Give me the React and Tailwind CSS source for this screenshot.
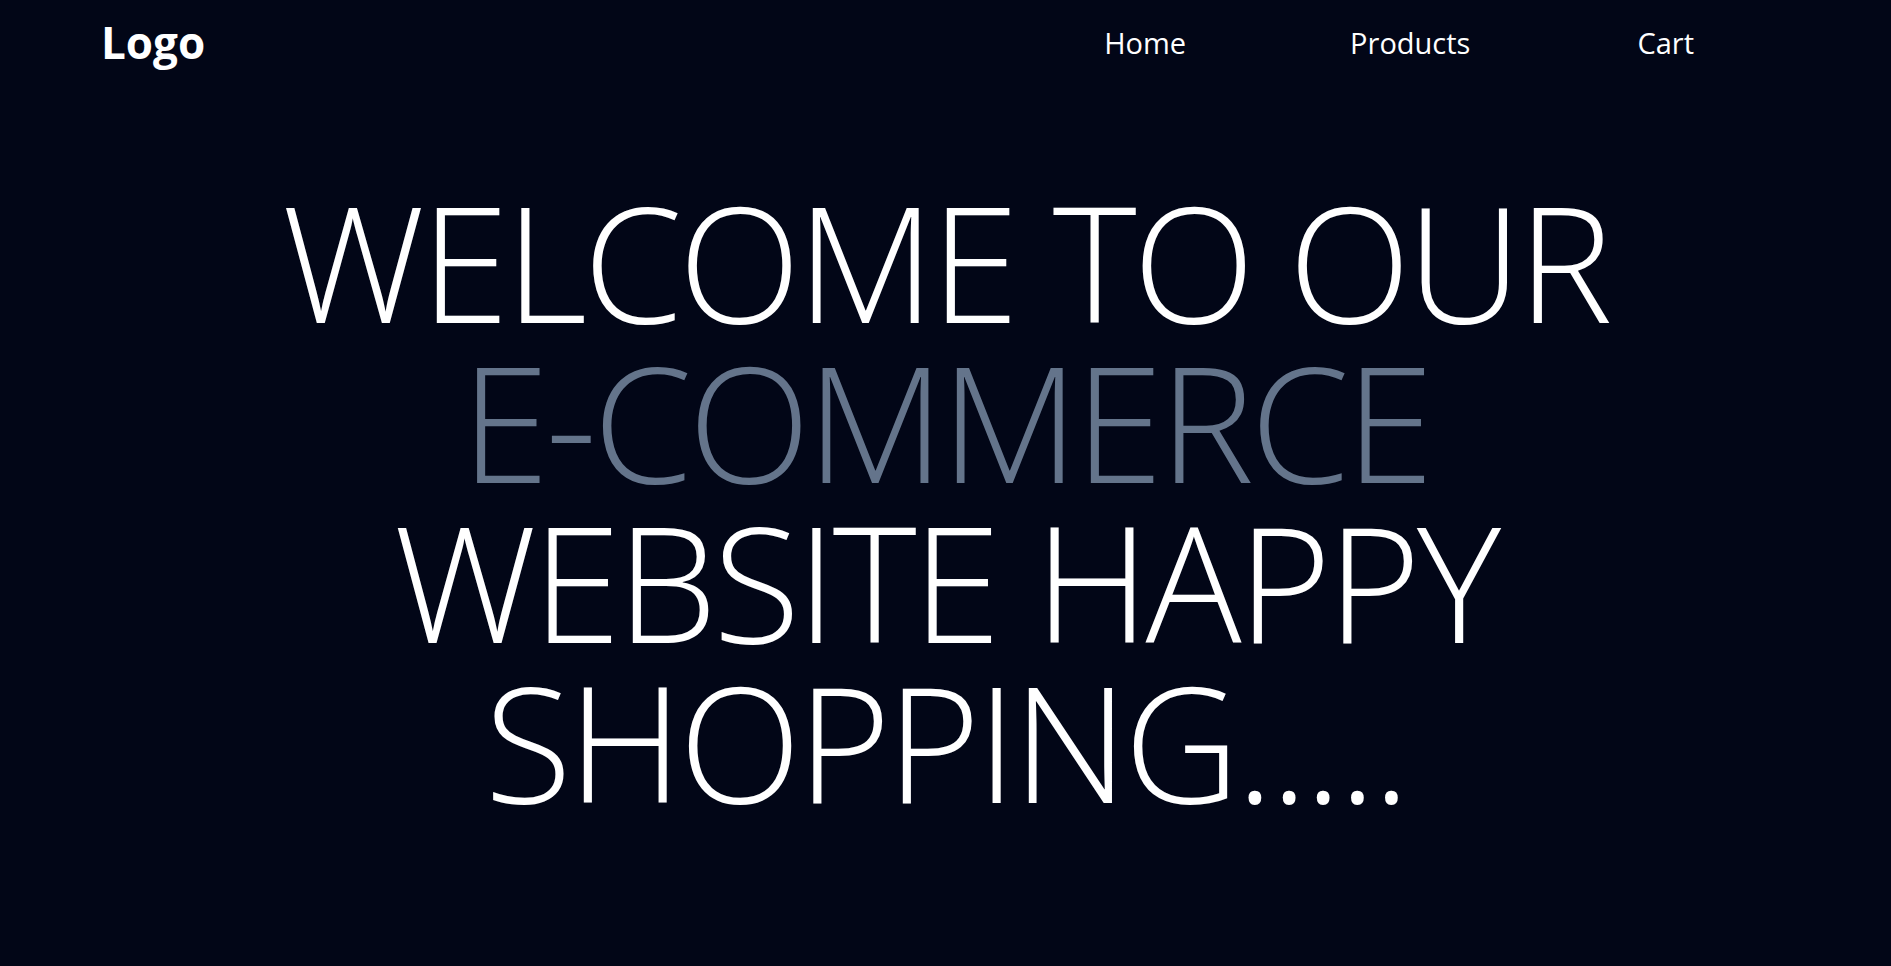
import React from "react";

export default function App() {
  const font = { fontFamily: '"Open Sans", "Noto Sans", sans-serif' };
  return (
    <div className="min-h-[966px] w-full bg-[#020617] text-white" style={font}>
      <header className="flex items-start justify-between pl-[101px] pr-[197px] pt-[12px]">
        <div className="text-[44px] font-bold leading-[60px]">Logo</div>
        <nav className="flex pt-[11px] text-[29px] leading-[40px]">
          <a className="mr-[164px] text-white">Home</a>
          <a className="mr-[167px] text-white">Products</a>
          <a className="text-white">Cart</a>
        </nav>
      </header>
      <main className="mt-[109px] flex justify-center">
        <h1 className="text-center text-[160px] font-light leading-[160px] tracking-[-4px]">
          WELCOME TO OUR
          <br />
          <span className="text-[#64748b]">E-COMMERCE</span>
          <br />
          WEBSITE HAPPY
          <br />
          SHOPPING.....
        </h1>
      </main>
    </div>
  );
}
